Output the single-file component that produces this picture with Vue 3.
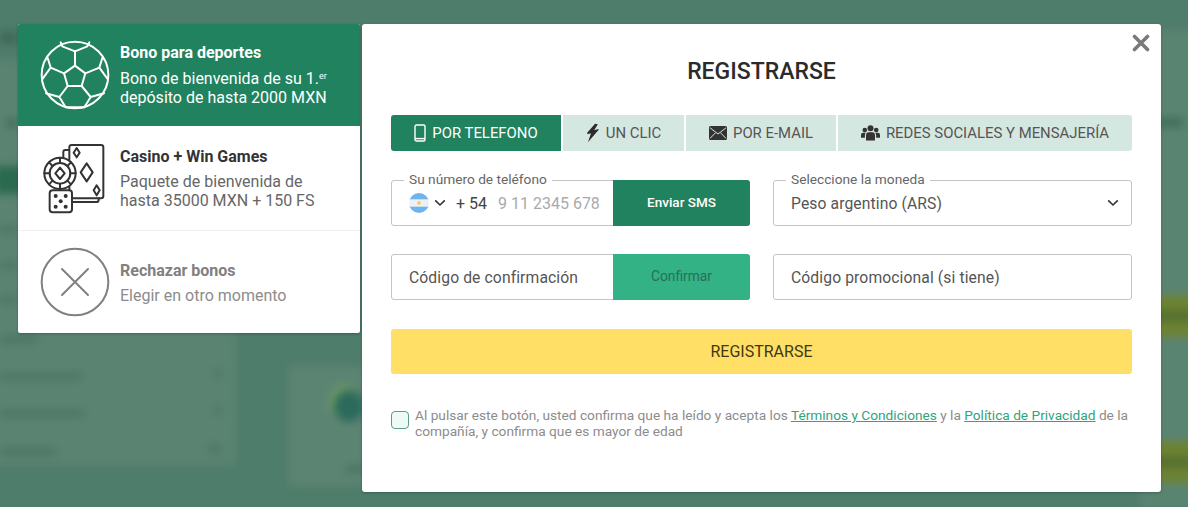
<script setup>
const tabs = [
  { id: 'phone', label: 'POR TELEFONO', width: '170px' },
  { id: 'click', label: 'UN CLIC', width: '121px' },
  { id: 'mail', label: 'POR E-MAIL', width: '150px' },
  { id: 'social', label: 'REDES SOCIALES Y MENSAJERÍA', width: '294px' },
];
// blurred shapes of the page behind the overlay
const sideRows = [
  { top: 226, width: 17 },
  { top: 262, width: 17 },
  { top: 296, width: 17 },
  { top: 336, width: 38 },
  { top: 373, width: 82 },
  { top: 410, width: 84 },
  { top: 448, width: 56 },
];
</script>

<template>
  <div class="page">
    <div class="backdrop">
      <div class="bd-side"></div>
      <div class="bd-main"></div>
      <div class="bd-active"></div>
      <div class="bd-title"></div>
      <div class="bd-sub"></div>
      <div v-for="r in sideRows" :key="r.top" class="bd-row" :style="{ top: r.top + 'px', width: r.width + 'px' }"></div>
      <div class="bd-count c1"></div>
      <div class="bd-count c2"></div>
      <div class="bd-count c3"></div>
      <div class="bd-card"></div>
      <div class="bd-logo"></div>
      <div class="bd-label"></div>
      <div class="bd-bet b1"></div>
      <div class="bd-bet b2"></div>
      <div class="bd-dark"></div>
    </div>

    <div class="dialog">
      <aside class="bonus">
        <div class="bonus-item active">
          <svg class="bonus-icon" viewBox="0 0 270 270" fill="none" stroke="#fff" stroke-width="6" stroke-linejoin="round" stroke-linecap="round">
            <circle cx="135" cy="135" r="100" />
            <path d="M135 107 166 130 155 168H113L102 130Z" />
            <path d="M135 107V64M135 64 97 49 92 37M135 64 172 49 178 37M102 130 62 113 53 84M62 113 38 146M166 130 208 113 217 84M208 113 232 146M113 168 88 201 48 190M88 201 107 232M155 168 182 201 222 190M182 201 163 232M107 232H163" />
          </svg>
          <div class="bonus-text">
            <div class="bonus-title">Bono para deportes</div>
            <div class="bonus-desc">Bono de bienvenida de su 1.<sup>er</sup><br />depósito de hasta 2000 MXN</div>
          </div>
        </div>
        <div class="bonus-item casino">
          <svg class="bonus-icon" viewBox="0 0 270 270" fill="none" stroke="#333" stroke-width="6" stroke-linejoin="round" stroke-linecap="round">
            <path d="M148 205V52Q148 45 155 45H243Q250 45 250 52V198Q250 205 243 205H160" />
            <path d="M147 60H136Q130 60 130 66V84M236 205V209Q236 216 229 216H158" />
            <path d="M170 54 179 68 170 82 161 68ZM200 100 218 127 200 154 182 127ZM230 166 239 181 230 196 221 181Z" />
            <circle cx="120" cy="130" r="47" fill="#fff" />
            <circle cx="120" cy="130" r="31" />
            <path d="M120 113 134 130 120 147 106 130ZM120 83V99M120 161V177M73 130H89M151 130H167M87 97 98 108M142 152 153 163M153 97 142 108M98 152 87 163" />
            <rect x="89" y="181" width="67" height="66" rx="9" fill="#fff" />
            <g fill="#333" stroke="none">
              <circle cx="107" cy="198" r="6" /><circle cx="137" cy="198" r="6" /><circle cx="122" cy="214" r="6" /><circle cx="107" cy="230" r="6" /><circle cx="137" cy="230" r="6" />
            </g>
          </svg>
          <div class="bonus-text">
            <div class="bonus-title">Casino + Win Games</div>
            <div class="bonus-desc">Paquete de bienvenida de<br />hasta 35000 MXN + 150 FS</div>
          </div>
        </div>
        <div class="bonus-item reject">
          <svg class="bonus-icon" viewBox="0 0 270 270" fill="none" stroke="#808080" stroke-width="6" stroke-linecap="round">
            <circle cx="135" cy="135" r="100" />
            <path d="M96 96 174 174M174 96 96 174" />
          </svg>
          <div class="bonus-text">
            <div class="bonus-title">Rechazar bonos</div>
            <div class="bonus-desc">Elegir en otro momento</div>
          </div>
        </div>
      </aside>

      <main class="modal">
        <svg class="close" viewBox="0 0 18 18" stroke="#7a7a7a" stroke-width="3.6" stroke-linecap="round">
          <path d="M2.5 2.5 15.5 15.5M15.5 2.5 2.5 15.5" />
        </svg>
        <h1 class="title">REGISTRARSE</h1>

        <nav class="tabs">
          <button v-for="(t, i) in tabs" :key="t.id" class="tab" :class="{ on: i === 0 }" :style="{ width: t.width }">
            <svg v-if="t.id === 'phone'" class="tab-ico" width="12" height="18" viewBox="0 0 12 18" fill="none" stroke="#fff" stroke-width="1.4">
              <rect x="1" y="1" width="10" height="16" rx="1.5" />
              <path d="M1 14.6H11" />
            </svg>
            <svg v-else-if="t.id === 'click'" class="tab-ico" width="14" height="20" viewBox="0 0 13 18" fill="#2b2b2b">
              <path d="M8.4 0.4 1.3 8.6 1.2 10.2 4.7 9.3 1.8 17.6 11.8 6 11.5 5.2 7.6 6.4 11 0.8Z" />
            </svg>
            <svg v-else-if="t.id === 'mail'" class="tab-ico" width="18" height="14" viewBox="0 0 18 14">
              <rect width="18" height="14" rx="1.5" fill="#333" />
              <path d="M1 1.8 9 8 17 1.8M1 12.4 6.5 6.8M17 12.4 11.5 6.8" fill="none" stroke="#d5e7e1" stroke-width="1" />
            </svg>
            <svg v-else class="tab-ico" width="19" height="16" viewBox="0 0 19 16" fill="#333">
              <circle cx="9.5" cy="3.2" r="3" />
              <circle cx="3.8" cy="5" r="2.3" />
              <circle cx="15.2" cy="5" r="2.3" />
              <path d="M5 15.6V10.6Q5 7.2 7.5 7.2H11.5Q14 7.2 14 10.6V15.6Z" />
              <path d="M0 12.8V10Q0 7.8 2 7.8H4.8Q3.9 8.8 3.9 10.6V12.8ZM19 12.8V10Q19 7.8 17 7.8H14.2Q15.1 8.8 15.1 10.6V12.8Z" />
            </svg>
            <span>{{ t.label }}</span>
          </button>
        </nav>

        <div class="form">
          <div class="field with-btn">
            <span class="legend">Su número de teléfono</span>
            <div class="phone">
              <svg class="flag" width="20" height="20" viewBox="0 0 20 20">
                <defs>
                  <clipPath id="flagClip"><circle cx="10" cy="10" r="10" /></clipPath>
                </defs>
                <g clip-path="url(#flagClip)">
                  <rect width="20" height="20" fill="#eef1f4" />
                  <rect width="20" height="6.3" fill="#6fb4ee" />
                  <rect y="13.7" width="20" height="6.3" fill="#6fb4ee" />
                  <circle cx="10" cy="10" r="1.8" fill="#f6c94c" />
                </g>
              </svg>
              <svg class="chev" width="12" height="8" viewBox="0 0 12 8" fill="none" stroke="#333" stroke-width="1.6">
                <path d="M1.2 1.4 6 6 10.8 1.4" />
              </svg>
              <span class="code">+ 54</span>
              <span class="placeholder">9 11 2345 678</span>
            </div>
            <button class="side-btn sms">Enviar SMS</button>
          </div>

          <div class="field select">
            <span class="legend">Seleccione la moneda</span>
            <span class="value">Peso argentino (ARS)</span>
            <svg class="chev" width="12" height="8" viewBox="0 0 12 8" fill="none" stroke="#333" stroke-width="1.6">
              <path d="M1.2 1.4 6 6 10.8 1.4" />
            </svg>
          </div>

          <div class="field with-btn">
            <span class="value grow">Código de confirmación</span>
            <button class="side-btn confirm">Confirmar</button>
          </div>

          <div class="field">
            <span class="value">Código promocional (si tiene)</span>
          </div>
        </div>

        <button class="submit">REGISTRARSE</button>

        <div class="terms">
          <span class="check"></span>
          <p>Al pulsar este botón, usted confirma que ha leído y acepta los <a href="#">Términos y Condiciones</a> y la <a href="#">Política de Privacidad</a> de la compañía, y confirma que es mayor de edad</p>
        </div>
      </main>
    </div>
  </div>
</template>

<style>
html, body { margin: 0; background: #4f7d6b; }
</style>

<style scoped>
.page {
  position: relative;
  width: 1188px;
  height: 507px;
  overflow: hidden;
  background: #4f7d6b;
  font-family: Roboto, "Liberation Sans", sans-serif;
}

/* page behind the overlay */
.backdrop {
  position: absolute;
  inset: 0;
  filter: blur(4px);
}
.backdrop > div { position: absolute; }
.bd-side { left: -10px; top: 60px; width: 246px; height: 405px; background: #5a8471; }
.bd-main { left: 1140px; top: 30px; width: 60px; height: 480px; background: #5a8472; }
.bd-active { left: -6px; top: 166px; width: 30px; height: 28px; background: #2a6a4e; }
.bd-title { left: 0; top: 32px; width: 17px; height: 12px; background: #3f6656; }
.bd-sub { left: 6px; top: 118px; width: 12px; height: 10px; background: #47705f; }
.bd-row { left: 0; height: 7px; background: #4c7563; }
.bd-count { left: 214px; width: 8px; height: 9px; background: #4f7866; }
.c1 { top: 369px; }
.c2 { top: 406px; }
.c3 { top: 444px; width: 14px !important; left: 208px; }
.bd-card { left: 288px; top: 366px; width: 80px; height: 120px; background: #5c8472; }
.bd-logo {
  left: 334px;
  top: 390px;
  width: 30px;
  height: 32px;
  border-radius: 50%;
  background: #2c6a5c;
  box-shadow: -4px -4px 0 1px #6f9c62;
}
.bd-label { left: 346px; top: 466px; width: 20px; height: 6px; background: #486f5e; }
.bd-bet { left: 1155px; width: 40px; height: 42px; background: linear-gradient(#6d8332, #6d8332 30%, #4c6a2e 50%, #6d8332 70%); }
.b1 { top: 295px; }
.b2 { top: 441px; }
.bd-dark { left: 1155px; top: 118px; width: 28px; height: 9px; background: #3f6d5a; }

.dialog {
  position: relative;
  display: flex;
  align-items: flex-start;
  gap: 2px;
  padding: 24px 0 0 18px;
}

/* bonus column */
.bonus {
  width: 342px;
  height: 309px;
  display: flex;
  flex-direction: column;
  background: #fff;
  border-radius: 2px;
  overflow: hidden;
  box-shadow: 0 1px 3px rgba(0, 0, 0, 0.25);
}
.bonus-item {
  height: 102px;
  display: flex;
  align-items: center;
  padding-left: 12px;
  box-sizing: border-box;
}
.bonus-item.active { background: #20825e; color: #fff; }
.bonus-item.casino { height: 105px; border-bottom: 1px solid #f0f0f0; }
.bonus-icon { width: 90px; height: 90px; flex: none; }
.casino .bonus-icon { align-self: flex-start; margin: 4px 10px 0 -10px; }
.active .bonus-title { margin-top: -1px; margin-bottom: 7px; }
.reject .bonus-text { padding-top: 1px; }
.bonus-title { font-size: 16px; font-weight: 700; line-height: 19px; margin-bottom: 6px; }
.bonus-desc { font-size: 16px; line-height: 19px; }
.bonus-desc sup { font-size: 9px; line-height: 0; vertical-align: 5px; }
.casino .bonus-title { color: #333; }
.casino .bonus-desc { color: #666; }
.reject .bonus-title { color: #808080; }
.reject .bonus-desc { color: #8c8c8c; }

/* main modal */
.modal {
  position: relative;
  width: 799px;
  height: 468px;
  box-sizing: border-box;
  padding: 0 29px;
  background: #fff;
  border-radius: 3px;
  box-shadow: 0 1px 3px rgba(0, 0, 0, 0.25);
}
.close { position: absolute; top: 10px; right: 11px; width: 18px; height: 18px; }
.title {
  margin: 0;
  padding-top: 34px;
  line-height: 28px;
  height: 28px;
  text-align: center;
  font-size: 23px;
  font-weight: 500;
  color: #2b2b2b;
}

.tabs { display: flex; gap: 2px; margin-top: 29px; height: 36px; }
.tab {
  display: flex;
  align-items: center;
  justify-content: center;
  gap: 6px;
  padding: 0;
  border: none;
  background: #d5e7e1;
  color: #555;
  font: 400 14.9px Roboto, sans-serif;
}
.tab:first-child { border-radius: 3px 0 0 3px; }
.tab:last-child { border-radius: 0 3px 3px 0; }
.tab.on { background: #20825e; color: #fff; }

.form {
  display: grid;
  grid-template-columns: 359px 359px;
  column-gap: 23px;
  row-gap: 28px;
  margin-top: 29px;
}
.field {
  position: relative;
  height: 46px;
  box-sizing: border-box;
  display: flex;
  align-items: center;
  padding-left: 17px;
  border: 1px solid #c4c4c4;
  border-radius: 3px;
  background: #fff;
}
.with-btn { padding-right: 0; }
.legend {
  position: absolute;
  left: 12px;
  top: -9px;
  padding: 0 5px;
  background: #fff;
  font-size: 13.7px;
  line-height: 15px;
  color: #666;
}
.phone { display: flex; align-items: center; flex: 1; }
.phone .chev { margin-left: 5px; }
.code { margin-left: 10px; font-size: 16px; color: #444; }
.placeholder { margin-left: 11px; font-size: 16px; color: #aaa; }
.value { font-size: 15.7px; color: #555; letter-spacing: 0.1px; }
.grow { flex: 1; }
.select { justify-content: space-between; padding-right: 12px; }
.side-btn {
  width: 137px;
  height: 46px;
  margin: -1px -1px -1px 0;
  padding: 0 0 3px;
  flex: none;
  border: none;
  border-radius: 0 3px 3px 0;
}
.sms { background: #20825e; color: #fff; font: 500 13.5px Roboto, sans-serif; }
.confirm { background: #33b286; color: #2a6e58; font: 400 13.8px Roboto, sans-serif; }

.submit {
  display: block;
  width: 100%;
  height: 45px;
  margin-top: 29px;
  border: none;
  border-radius: 3px;
  background: #ffdf66;
  color: #3f3810;
  font: 400 16px Roboto, sans-serif;
}

.terms { display: flex; gap: 6px; margin-top: 33px; }
.check {
  flex: none;
  width: 18px;
  height: 18px;
  box-sizing: border-box;
  margin-top: 4px;
  border: 1.5px solid #5a9e88;
  border-radius: 4px;
  background: #eefaf6;
}
.terms p { margin: 0; font-size: 13.7px; line-height: 16px; color: #8c8c8c; }
.terms a { color: #2fa47f; }
</style>
